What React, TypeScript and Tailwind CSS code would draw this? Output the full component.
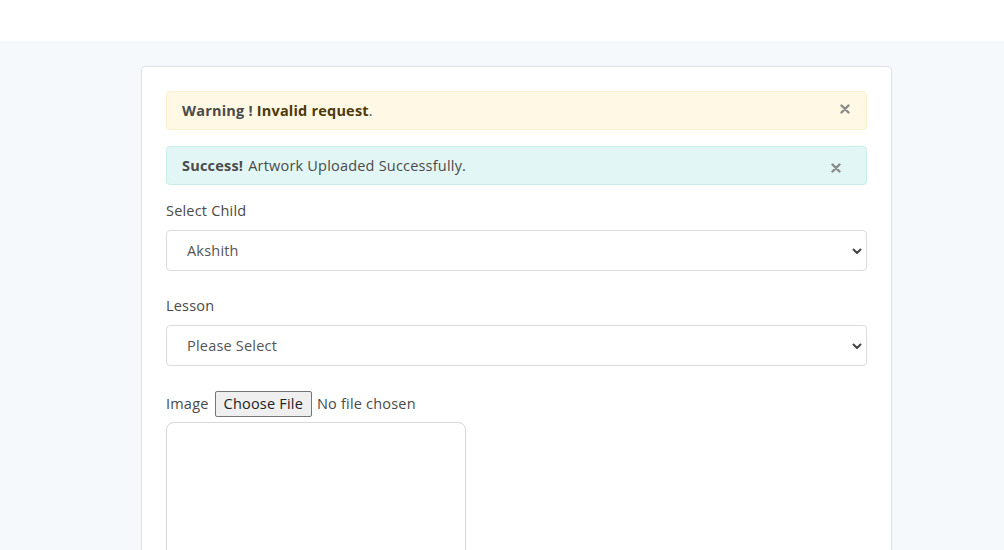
import React from "react";

function Alert({
  tone,
  children,
  closeClass,
}: {
  tone: "warning" | "success";
  children: React.ReactNode;
  closeClass: string;
}) {
  const toneClass =
    tone === "warning"
      ? "bg-[#fff8e4] border-[#fdf1cc]"
      : "bg-[#e2f7f5] border-[#c9eeea]";
  return (
    <div
      className={`relative h-[39px] rounded-[4px] border flex items-center pl-[15px] text-[14.5px] tracking-[0.2px] text-[#4a4a4a] ${toneClass}`}
    >
      {children}
      <span
        className={`absolute top-1/2 -translate-y-1/2 text-[#8a8a8a] ${closeClass}`}
      >
        <svg width="10" height="10" viewBox="0 0 10 10">
          <path
            d="M1.5 1.5 L8.5 8.5 M8.5 1.5 L1.5 8.5"
            stroke="currentColor"
            strokeWidth="2.4"
            strokeLinecap="round"
          />
        </svg>
      </span>
    </div>
  );
}

function SelectBox({ value }: { value: string }) {
  return (
    <div className="relative">
      <select
        defaultValue={value}
        className="w-full h-[41px] appearance-none rounded-[4px] border border-[#dcdcdc] bg-white pl-[20px] text-[14.5px] tracking-[0.2px] text-[#555] outline-none"
      >
        <option>{value}</option>
      </select>
      <svg
        className="absolute right-[4px] top-1/2 -translate-y-1/2 pointer-events-none"
        width="12"
        height="12"
        viewBox="0 0 12 12"
      >
        <path
          d="M2.5 4.5 L6 8 L9.5 4.5"
          fill="none"
          stroke="#444"
          strokeWidth="2"
          strokeLinecap="round"
          strokeLinejoin="round"
        />
      </svg>
    </div>
  );
}

export default function App() {
  return (
    <div
      className="min-h-[550px] bg-[#f6f9fc] text-[#4a4a4a]"
      style={{ fontFamily: '"Open Sans", "Noto Sans", sans-serif' }}
    >
      <div className="h-[41px] bg-white" />
      <div className="pt-[25px] pl-[141px] pr-[112px]">
        <div className="h-[500px] rounded-[4px] border border-[#dde1e6] bg-white px-[24px] pt-[24px]">
          <Alert tone="warning" closeClass="right-[16px] -mt-[2px]">
            <span className="font-bold">
              Warning ! <span className="text-[#4d3a0c]">Invalid request</span>
            </span>
            .
          </Alert>
          <div className="mt-[16px]">
            <Alert tone="success" closeClass="right-[25px] mt-[2px]">
              <span className="font-bold mr-[5px]">Success!</span>
              Artwork Uploaded Successfully.
            </Alert>
          </div>
          <div className="mt-[16px] text-[14.5px] tracking-[0.2px] leading-[20px]">
            Select Child
          </div>
          <div className="mt-[9px]">
            <SelectBox value="Akshith" />
          </div>
          <div className="mt-[25px] text-[14.5px] tracking-[0.2px] leading-[20px]">
            Lesson
          </div>
          <div className="mt-[9px]">
            <SelectBox value="Please Select" />
          </div>
          <div className="mt-[24px] flex items-center text-[14.5px] tracking-[0.2px] h-[28px]">
            <span>Image</span>
            <span className="ml-[6px] h-[26px] px-[8px] flex items-center rounded-[2px] border border-[#767676] bg-[#efefef] text-[#222]">
              Choose File
            </span>
            <span className="ml-[5px]">No file chosen</span>
          </div>
          <div className="mt-[4px] w-[300px] h-[200px] rounded-[8px] border border-[#d8d8d8]" />
        </div>
      </div>
    </div>
  );
}
